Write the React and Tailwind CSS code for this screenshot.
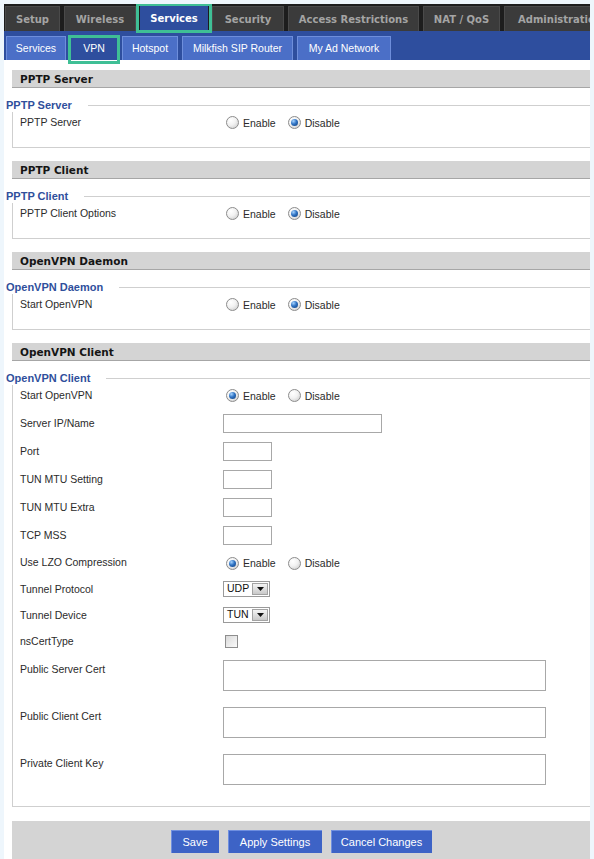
const font = { fontFamily: '"Liberation Sans", Arial, sans-serif' };
const bold = { fontFamily: '"DejaVu Sans", Verdana, sans-serif' };

const topTabs = [
  { label: "Setup", w: "w-[55px]" },
  { label: "Wireless", w: "w-[72px]" },
  { label: "Services", w: "w-[68px]", active: true },
  { label: "Security", w: "w-[72px]" },
  { label: "Access Restrictions", w: "w-[131px]" },
  { label: "NAT / QoS", w: "w-[77px]" },
  { label: "Administration", w: "w-[112px]" },
];

const subTabs = [
  { label: "Services", w: "w-[60px]" },
  { label: "VPN", w: "w-[48px]", active: true },
  { label: "Hotspot", w: "w-[56px]" },
  { label: "Milkfish SIP Router", w: "w-[111px]" },
  { label: "My Ad Network", w: "w-[94px]" },
];

const Radio = ({ checked }) => (
  <span className="w-[13px] h-[13px] rounded-full border border-[#8c8c8c] bg-[radial-gradient(circle_at_35%_30%,#ffffff_0%,#f2f2f2_45%,#c6c6c6_100%)] flex items-center justify-center shrink-0">
    {checked && (
      <span className="w-[7px] h-[7px] rounded-full bg-[radial-gradient(circle_at_35%_30%,#a6d4ff_0%,#2f73c4_45%,#113c78_100%)]" />
    )}
  </span>
);

const RadioPair = ({ enabled }) => (
  <div className="flex items-center text-[10.5px] text-[#2b2b2b]">
    <span className="ml-[3px] pt-[1px]"><Radio checked={enabled} /></span>
    <span className="ml-[4px] pt-[3px]">Enable</span>
    <span className="ml-[12px] pt-[1px]"><Radio checked={!enabled} /></span>
    <span className="ml-[4px] pt-[3px]">Disable</span>
  </div>
);

const Select = ({ value }) => (
  <div className="w-[47px] h-[16px] border border-[#9a9a9a] bg-white flex items-center justify-between pl-[3px] pr-[1px] text-[10.5px] text-[#111]">
    <span>{value}</span>
    <span className="w-[16px] h-[12px] border border-[#a3a3a3] bg-[linear-gradient(#f4f4f4,#c9c9c9)] flex items-center justify-center">
      <svg width="7" height="4" viewBox="0 0 7 4">
        <path d="M0 0 H7 L3.5 4 Z" fill="#111" />
      </svg>
    </span>
  </div>
);

const TextBox = ({ w }) => (
  <input
    type="text"
    readOnly
    className={`${w} h-[19px] border border-[#a8a8a8] bg-white outline-none`}
  />
);

const Row = ({ label, h = "h-[28px]", children }) => (
  <div className={`flex items-center ${h}`}>
    <span className="w-[203px] pt-[1px] text-[10.5px] text-[#2b2b2b]">{label}</span>
    {children}
  </div>
);

const Header = ({ title }) => (
  <div
    className="ml-[8px] h-[18px] bg-[#d4d4d4] border-b border-[#a6a6a6] flex items-center pl-[8px] pt-[2px] text-[10.5px] font-bold text-[#151515]"
    style={bold}
  >
    {title}
  </div>
);

const Legend = ({ title }) => (
  <div className="mt-[10px] h-[14px] flex items-center pl-[2px]">
    <span className="text-[11px] font-bold text-[#2f4f9c] leading-none pt-[1px]">{title}</span>
    <div className="ml-[16px] flex-1 h-px bg-[#cfcfcf]" />
  </div>
);

const SimpleSection = ({ title, legend, label, first }) => (
  <div className={first ? "mt-[10px]" : "mt-[13px]"}>
    <Header title={title} />
    <Legend title={legend} />
    <div className="ml-[8px] border-l border-b border-[#cfcfcf] pl-[7px] pb-[15px]">
      <Row label={label} h="h-[20px]">
        <RadioPair enabled={false} />
      </Row>
    </div>
  </div>
);

const Button = ({ label, w }) => (
  <button className={`${w} h-[23px] bg-[#3d63c6] border-t border-l border-[#6f8fe0] text-white text-[11px]`}>
    {label}
  </button>
);

export default function App() {
  return (
    <div className="min-h-[859px] bg-[#eef6fc] pt-[4px] pl-[4px]" style={font}>
      <div className="w-[586px] h-[855px] overflow-hidden bg-white">
        {/* top navigation */}
        <div className="h-[27px] bg-[#1d1d1d] pt-[2px] pl-[1px] flex gap-[4px]">
          {topTabs.map((t) => (
            <div
              key={t.label}
              className={`${t.w} shrink-0 relative flex items-center justify-center text-[10px] font-bold ${
                t.active ? "bg-[#2e4e9e] text-white" : "bg-[#3b3b3b] text-[#a4a4a4] border-x border-t border-[#4a4a4a]"
              }`}
              style={bold}
            >
              {t.label}
              {t.active && (
                <span className="absolute left-[-4px] right-[-4px] top-[-3px] bottom-[-2px] border-[3px] border-[#3fbf95] pointer-events-none" />
              )}
            </div>
          ))}
        </div>

        {/* sub navigation */}
        <div className="h-[29px] bg-[#2e4e9e] flex items-end pl-[2px] gap-[4px]">
          {subTabs.map((t) => (
            <div
              key={t.label}
              className={`${t.w} h-[24px] shrink-0 relative flex items-center justify-center pt-[1px] text-[10.5px] text-white ${
                t.active ? "bg-[#2e4e9e]" : "bg-[#4b6fc7] border-x border-t border-[#6e8edb]"
              }`}
            >
              {t.label}
              {t.active && (
                <span className="absolute left-[-2px] right-[-2px] top-[-1px] bottom-[-4px] border-[3px] border-[#3fbf95] pointer-events-none" />
              )}
            </div>
          ))}
        </div>

        <SimpleSection first title="PPTP Server" legend="PPTP Server" label="PPTP Server" />
        <SimpleSection title="PPTP Client" legend="PPTP Client" label="PPTP Client Options" />
        <SimpleSection title="OpenVPN Daemon" legend="OpenVPN Daemon" label="Start OpenVPN" />

        <div className="mt-[13px]">
          <Header title="OpenVPN Client" />
          <Legend title="OpenVPN Client" />
          <div className="ml-[8px] border-l border-b border-[#cfcfcf] pl-[7px] pb-[21px]">
            <Row label="Start OpenVPN" h="h-[20px]">
              <RadioPair enabled />
            </Row>
            <div className="mt-[4px]">
              <Row label="Server IP/Name">
                <TextBox w="w-[159px]" />
              </Row>
              <Row label="Port">
                <TextBox w="w-[49px]" />
              </Row>
              <Row label="TUN MTU Setting">
                <TextBox w="w-[49px]" />
              </Row>
              <Row label="TUN MTU Extra">
                <TextBox w="w-[49px]" />
              </Row>
              <Row label="TCP MSS">
                <TextBox w="w-[49px]" />
              </Row>
              <Row label="Use LZO Compression" h="h-[27px]">
                <RadioPair enabled />
              </Row>
              <Row label="Tunnel Protocol" h="h-[26px]">
                <Select value="UDP" />
              </Row>
              <Row label="Tunnel Device" h="h-[26px]">
                <Select value="TUN" />
              </Row>
              <Row label="nsCertType" h="h-[26px]">
                <span className="ml-[2px] w-[13px] h-[13px] border border-[#8e8e8e] bg-[linear-gradient(135deg,#d9d9d9,#fbfbfb)]" />
              </Row>
            </div>
            <div className="mt-[6px] flex flex-col gap-[16px]">
              {["Public Server Cert", "Public Client Cert", "Private Client Key"].map((l) => (
                <div key={l} className="flex items-start">
                  <span className="w-[203px] pt-[2px] text-[10.5px] text-[#2b2b2b]">{l}</span>
                  <textarea
                    readOnly
                    className="w-[323px] h-[31px] border border-[#a8a8a8] bg-white resize-none outline-none"
                  />
                </div>
              ))}
            </div>
          </div>
        </div>

        {/* footer */}
        <div className="mt-[14px] ml-[8px] h-[60px] bg-[#d4d4d4] pt-[9px] flex justify-center gap-[9px]">
          <Button label="Save" w="w-[48px]" />
          <Button label="Apply Settings" w="w-[94px]" />
          <Button label="Cancel Changes" w="w-[101px]" />
        </div>
      </div>
    </div>
  );
}
